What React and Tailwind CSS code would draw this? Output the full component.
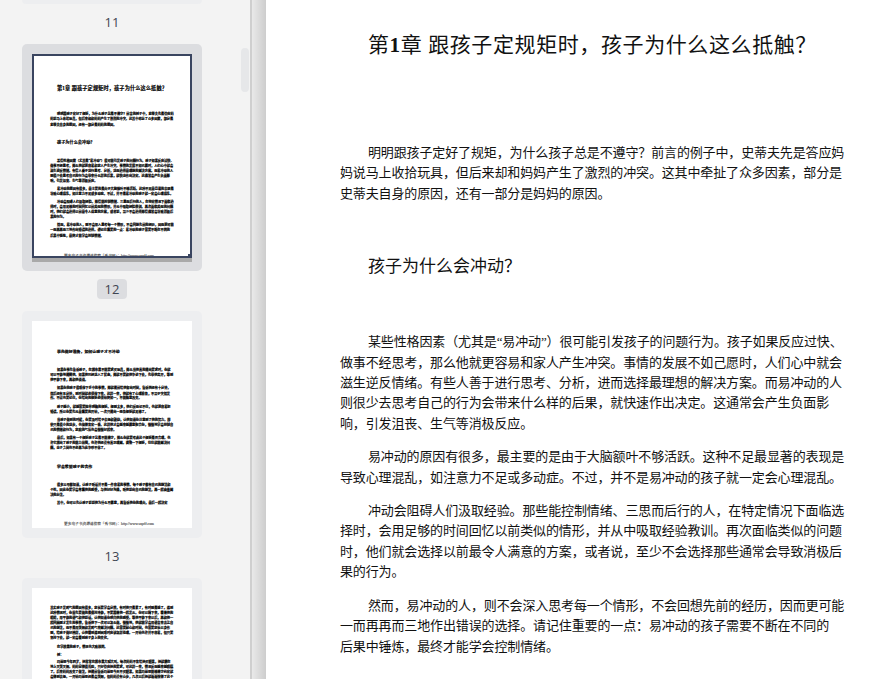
const SERIF = "font-['Liberation_Serif','Noto_Sans_CJK_SC',serif]";
const STROKE = "[-webkit-text-stroke:0.7px_#000]";

function Lines({ lines }) {
  return (
    <div className="tracking-[-0.13px] text-[13px] leading-[20.4px] whitespace-nowrap">
      {lines.map((l, i) => (
        <div key={i} className={i === 0 ? "pl-[28px]" : ""}>
          {l}
        </div>
      ))}
    </div>
  );
}

function Para({ children, noIndent, className = "" }) {
  return (
    <p className={`${className} w-[502px] text-[13px] leading-[20.4px] tracking-[-0.13px] ${noIndent ? "" : "indent-[28px]"}`}>
      {children}
    </p>
  );
}

function CurrentPage({ thumb }) {
  return (
    <div className={`${SERIF} pl-[74px] ${thumb ? `pt-[94px] font-bold text-black ${STROKE}` : "text-[#111]"}`}>
      <h1 className={`pt-[30px] pl-[28px] text-[21px] leading-[30px] whitespace-nowrap tracking-[0.6px] ${thumb ? "font-bold" : "font-normal"}`}>
        第<b>1</b>章 跟孩子定规矩时，孩子为什么这么抵触？
      </h1>
      <div className="mt-[83px]">
        <Lines
          lines={[
            "明明跟孩子定好了规矩，为什么孩子总是不遵守？前言的例子中，史蒂夫先是答应妈",
            "妈说马上收拾玩具，但后来却和妈妈产生了激烈的冲突。这其中牵扯了众多因素，部分是",
            "史蒂夫自身的原因，还有一部分是妈妈的原因。",
          ]}
        />
      </div>
      <h2 className={`mt-[51px] pl-[28px] text-[17px] leading-[24px] ${thumb ? "font-bold" : "font-normal"}`}>孩子为什么会冲动？</h2>
      <div className="mt-[53px]">
        <Lines
          lines={[
            "某些性格因素（尤其是“易冲动”）很可能引发孩子的问题行为。孩子如果反应过快、",
            "做事不经思考，那么他就更容易和家人产生冲突。事情的发展不如己愿时，人们心中就会",
            "滋生逆反情绪。有些人善于进行思考、分析，进而选择最理想的解决方案。而易冲动的人",
            "则很少去思考自己的行为会带来什么样的后果，就快速作出决定。这通常会产生负面影",
            "响，引发沮丧、生气等消极反应。",
          ]}
        />
      </div>
      <div className="mt-[13px]">
        <Lines
          lines={[
            "易冲动的原因有很多，最主要的是由于大脑额叶不够活跃。这种不足最显著的表现是",
            "导致心理混乱，如注意力不足或多动症。不过，并不是易冲动的孩子就一定会心理混乱。",
          ]}
        />
      </div>
      <div className="mt-[13px]">
        <Lines
          lines={[
            "冲动会阻碍人们汲取经验。那些能控制情绪、三思而后行的人，在特定情况下面临选",
            "择时，会用足够的时间回忆以前类似的情形，并从中吸取经验教训。再次面临类似的问题",
            "时，他们就会选择以前最令人满意的方案，或者说，至少不会选择那些通常会导致消极后",
            "果的行为。",
          ]}
        />
      </div>
      <div className="mt-[13px]">
        <Lines
          lines={[
            "然而，易冲动的人，则不会深入思考每一个情形，不会回想先前的经历，因而更可能",
            "一而再再而三地作出错误的选择。请记住重要的一点：易冲动的孩子需要不断在不同的",
            "后果中锤炼，最终才能学会控制情绪。",
          ]}
        />
      </div>
      <Footer className="mt-[66px]" />
    </div>
  );
}

function Footer({ className }) {
  return (
    <div className={`${className} pl-[57px] text-[15px] leading-[12px] font-normal text-[#444] whitespace-nowrap [-webkit-text-stroke:0.4px_#555]`}>
      更多电子书资源请搜索「秀书网」：http://www.sxpdf.com
    </div>
  );
}

function NextPage() {
  return (
    <div className={`${SERIF} pl-[74px] font-bold text-black ${STROKE}`}>
      <h2 className="pt-[112px] pl-[28px] text-[16px] leading-[24px] font-bold whitespace-nowrap">事先做好准备，如何让孩子才不冲动</h2>
      <Para className="mt-[54px]">如果你事先告诉孩子，在超市里不能要求买玩具，那么当他真的提出要求时，你就可以平静地提醒他。如果他已经进入了状态，那就不要和他争论下去，先带他离开，等到他平静下来，再和他谈谈。</Para>
      <Para className="mt-[14px]">如果你的孩子很难停下手中的事情，那就提前给他留出时间，告诉他还有十分钟，然后还有五分钟，到时间就必须停下来。这样一来，他就有了心理准备，不至于突然发作。不过也要记住，你给出的规矩必须始终如一，不能随意改变。</Para>
      <Para className="mt-[14px]">孩子越小，就越需要简单明确的规矩。规则太多，他们反而记不住，也就更容易犯错误。所以你要先从最重要的开始，一次只提出一两条规矩就足够了。</Para>
      <Para className="mt-[12px]">当孩子做到的时候，你要及时给予表扬和鼓励，让他知道你注意到了他的努力。即使只是很小的进步，也值得肯定一番。这样他才会越来越愿意配合你，慢慢地学会控制自己的情绪和行为，家庭的气氛也会慢慢好起来。</Para>
      <Para className="mt-[14px]">最后，如果有一个规矩孩子总是不能遵守，那么你就要考虑这个规矩是否合理。也许它超出了孩子的能力范围，也许他还没有真正理解。调整一下规矩，往往就能解决问题，亲子之间也不必再为此争吵不休了。</Para>
      <h2 className="mt-[54px] pl-[28px] text-[16px] leading-[24px] font-bold">学会希望孩子的合作</h2>
      <Para className="mt-[53px]">很多父母都知道，让孩子听话并不是一件容易的事情。每个孩子都有自己的想法和个性。因此你要学会尊重他的感受，与他好好沟通，听他说出自己的想法，再一起商量解决的办法。</Para>
      <Para className="mt-[12px]">其中，你可以先让孩子说说他为什么不愿意，再告诉他你的理由，最后一起决定</Para>
      <Footer className="mt-[67px]" />
    </div>
  );
}

function LaterPage() {
  return (
    <div className={`${SERIF} pl-[74px] font-bold text-black pt-[72px] ${STROKE}`}>
      <Para noIndent>其实孩子发脾气的原因有很多，家长要学会分辨，有时他只是累了，有时则是饿了。遇到这种情况时，你首先要做的是保持冷静，不要跟着他一起发火。你可以蹲下来，看着他的眼睛，用平静的语气和他说话，让他知道你明白他的感受。等他平静下来以后，再和他一起回顾刚才发生的事情，告诉他下一次可以怎么做。慢慢地，他就能学会用语言来表达自己的想法，而不是用哭闹和发脾气来解决问题。这需要耐心和时间，也需要家长以身作则，给孩子做好榜样，让他看到遇到困难时应该怎样处理。一开始也许并不容易，但只要坚持下去，就一定会看到孩子身上的变化。</Para>
      <Para className="mt-[14px]">在学校里的孩子，情况也大致相同。</Para>
      <Para className="mt-[16px]">例：</Para>
      <Para className="mt-[8px]">玛丽亚今年四岁，她常常在超市里大喊大叫。每次妈妈不肯给她买糖果，她就躺在地上又哭又闹。妈妈觉得很丢脸，只好答应她的要求，可这样一来，情况反而越来越糟糕了。后来妈妈改变了做法，她提前告诉玛丽亚今天不买糖果，如果玛丽亚能够遵守约定就会得到表扬。一开始玛丽亚还是会哭闹，但妈妈没有让步，几次以后她就渐渐懂得了这个规矩。</Para>
    </div>
  );
}

function Thumb({ children }) {
  return (
    <div className="w-[160px] h-[207px] bg-white overflow-hidden">
      <div className="w-[653px] h-[845px] origin-top-left scale-[0.245]">{children}</div>
    </div>
  );
}

function Label({ n, active }) {
  return (
    <div className="mt-[8px] mb-[12px] flex justify-center">
      <span className={`w-[30px] h-[20px] flex items-center justify-center rounded-[4px] text-[13px] leading-[20px] text-[#3f4552] font-['Open_Sans',sans-serif] ${active ? "bg-[#dcdde0]" : ""}`}>
        {n}
      </span>
    </div>
  );
}

export default function App() {
  return (
    <div className="flex w-[869px] h-[679px] overflow-hidden bg-white">
      <aside className="relative w-[250px] h-full shrink-0 bg-[#f3f3f3] overflow-hidden">
        <div className="flex flex-col items-start pl-[22px]">
          <div className="w-[180px] h-[4px] bg-[#edeef0] rounded-b-[5px]" />
          <div className="w-[180px]"><Label n="11" /></div>

          <div className="w-[180px] pt-[10px] px-[10px] pb-[9px] bg-[#dcdde0] rounded-[5px]">
            <div className="relative w-[160px] h-[208px]">
              <div className="w-[160px] h-[204px] bg-white overflow-hidden">
                <div className="w-[653px] h-[845px] origin-top-left scale-[0.245]">
                  <CurrentPage thumb />
                </div>
              </div>
              <div className="w-[160px] h-[4px] bg-[#a9a9a9]" />
              <div className="absolute left-0 top-0 w-[160px] h-[204px] border-2 border-[#3a4560]" />
              <div className="absolute left-[156px] top-[200px] w-[4px] h-[4px] bg-[#3a4560]" />
            </div>
          </div>
          <div className="w-[180px]"><Label n="12" active /></div>

          <div className="w-[180px] p-[10px] bg-[#edeef0] rounded-[5px]">
            <Thumb><NextPage /></Thumb>
          </div>
          <div className="w-[180px]"><Label n="13" /></div>

          <div className="w-[180px] p-[10px] bg-[#edeef0] rounded-[5px]">
            <Thumb><LaterPage /></Thumb>
          </div>
        </div>
        <div className="absolute left-[241px] top-[48px] w-[8px] h-[44px] rounded-full bg-[#e6e7e9]" />
      </aside>
      <div className="w-[2px] h-full shrink-0 bg-[#cfcfcf]" />
      <div className="w-[14px] h-full shrink-0 bg-gradient-to-r from-[#e9e9e9] to-[#cdcdcd]" />
      <main className="flex-1 min-w-0 h-full bg-white overflow-hidden">
        <div className="w-[653px]">
          <CurrentPage />
        </div>
      </main>
    </div>
  );
}
